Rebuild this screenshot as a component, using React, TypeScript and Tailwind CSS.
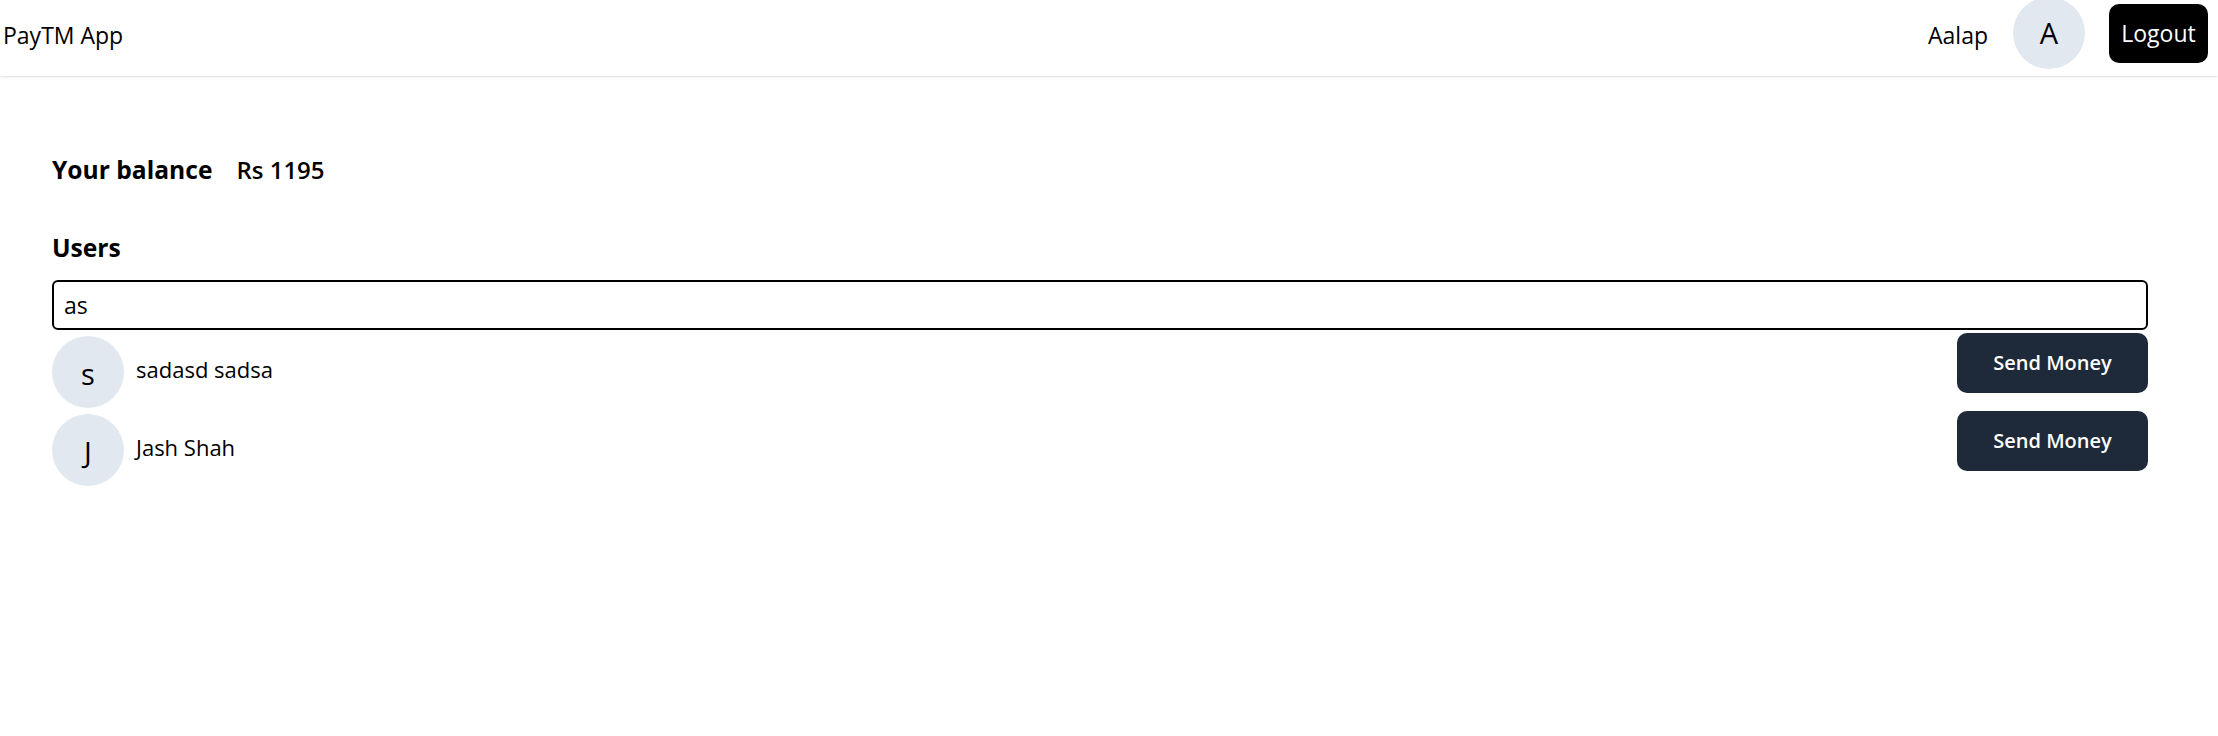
import React from "react";

const users = [
  { first: "sadasd", last: "sadsa" },
  { first: "Jash", last: "Shah" },
];

export default function App() {
  return (
    <div className="min-h-[736px] bg-white text-black" style={{ fontFamily: '"Open Sans", "Noto Sans", sans-serif' }}>
      <header className="h-[76px] shadow flex justify-between">
        <div className="h-[70px] flex items-center pl-[3px] text-[23px]">PayTM App</div>
        <div className="flex items-start">
          <div className="h-[70px] flex items-center mr-[25px] text-[23px]">Aalap</div>
          <div className="w-[72px] h-[72px] mt-[-3px] rounded-full bg-slate-200 flex items-center justify-center text-[29px]">
            A
          </div>
          <button className="ml-[24px] mt-[4px] mr-[10px] w-[99px] h-[59px] bg-black text-white rounded-[10px] text-[23px] flex items-center justify-center">
            Logout
          </button>
        </div>
      </header>
      <main className="pl-[52px] pr-[70px]">
        <div className="mt-[74px] h-[40px] flex items-center">
          <div className="font-bold text-[24.6px]">Your balance</div>
          <div className="font-semibold ml-[24px] text-[24px]">Rs 1195</div>
        </div>
        <div className="mt-[38px] h-[40px] flex items-center font-bold text-[24.6px]">Users</div>
        <div className="mt-[12px]">
          <input
            defaultValue="as"
            className="w-full h-[50px] border-2 border-black rounded-[6px] px-[10px] text-[23px] outline-none"
          />
        </div>
        <div className="flex flex-col gap-[6px] mt-[6px]">
          {users.map((u) => (
            <div key={u.first} className="flex justify-between items-start">
              <div className="flex items-center">
                <div className="w-[72px] h-[72px] rounded-full bg-slate-200 flex items-center justify-center text-[29px] pt-[3px]">
                  {u.first[0]}
                </div>
                <div className="ml-[12px] text-[22px] pb-[5px]">
                  {u.first} {u.last}
                </div>
              </div>
              <button className="mt-[-3px] w-[191px] h-[60px] bg-gray-800 text-white rounded-[10px] font-semibold text-[20px]">
                Send Money
              </button>
            </div>
          ))}
        </div>
      </main>
    </div>
  );
}
